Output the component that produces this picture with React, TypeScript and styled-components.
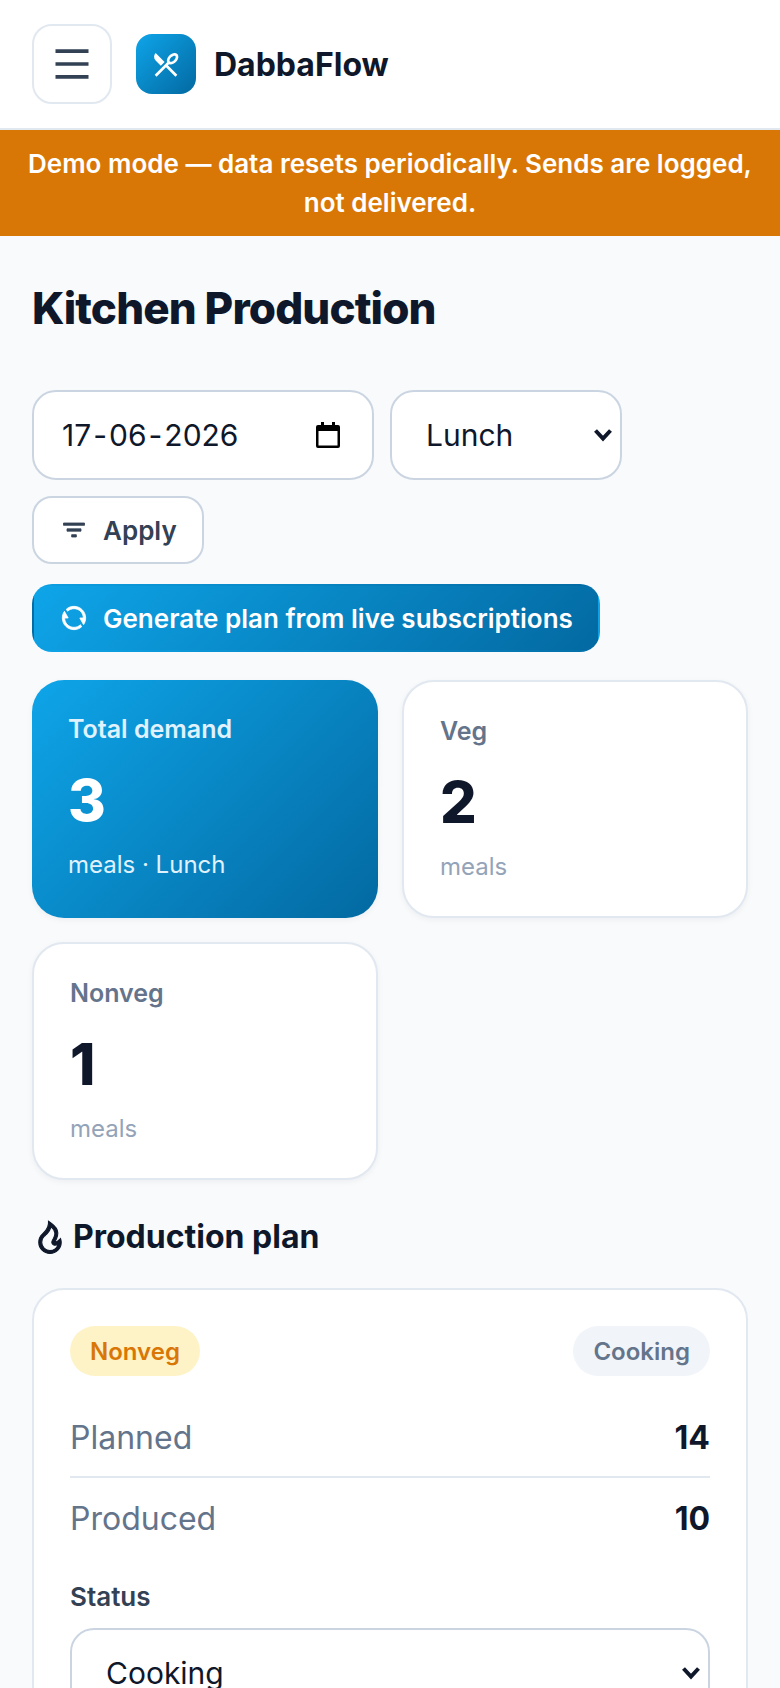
import React from "react";
import styled, { createGlobalStyle } from "styled-components";
import {
  RiFilter3Line,
  RiFireLine,
  RiMenuLine,
  RiRefreshLine,
  RiRestaurant2Line,
} from "react-icons/ri";

const GlobalStyle = createGlobalStyle`
  html, body {
    margin: 0;
    padding: 0;
    background: #f8fafc;
    font-family: Inter, "Noto Sans", sans-serif;
    color: #0f172a;
  }
  * { box-sizing: border-box; }
`;

const Page = styled.div`
  width: 780px;
  height: 1688px;
  overflow: hidden;
`;

const Header = styled.header`
  display: flex;
  align-items: center;
  height: 130px;
  padding: 0 32px;
  background: #fff;
  border-bottom: 2px solid #e2e8f0;
`;

const MenuButton = styled.button`
  display: flex;
  align-items: center;
  justify-content: center;
  width: 80px;
  height: 80px;
  padding: 0;
  margin-right: 24px;
  background: #fff;
  border: 2px solid #e2e8f0;
  border-radius: 20px;
  color: #334155;
  font-size: 44px;
`;

const LogoMark = styled.div`
  display: flex;
  align-items: center;
  justify-content: center;
  width: 60px;
  height: 60px;
  margin-right: 18px;
  border-radius: 16px;
  background: linear-gradient(135deg, #0ea5e9, #0369a1);
  color: #fff;
  font-size: 32px;
`;

const Brand = styled.div`
  font-size: 32px;
  font-weight: 700;
  color: #0f172a;
`;

const Banner = styled.div`
  height: 106px;
  padding: 14px 20px;
  background: #d97706;
  color: #fff;
  font-size: 26px;
  font-weight: 600;
  line-height: 39px;
  text-align: center;
`;

const Main = styled.main`
  padding: 44px 32px 0;
`;

const Title = styled.h1`
  margin: 0 0 54px;
  font-size: 44px;
  font-weight: 800;
  line-height: 56px;
  letter-spacing: -0.88px;
  color: #0f172a;
`;

const FilterRow = styled.div`
  display: flex;
  flex-wrap: wrap;
  gap: 16px;
  margin-bottom: 20px;
`;

const DateField = styled.div`
  display: flex;
  align-items: center;
  justify-content: space-between;
  width: 342px;
  height: 90px;
  padding: 0 32px 0 26px;
  background: #fff;
  border: 2px solid #cbd5e1;
  border-radius: 24px;
  font-size: 30px;
  color: #0f172a;
`;

const DatePart = styled.span`
  padding: 0 2px;
`;

const Picker = styled.select<{ $wide?: boolean }>`
  appearance: none;
  width: ${(p) => (p.$wide ? "640px" : "232px")};
  height: 90px;
  padding: 0 34px;
  background: #fff
    url("data:image/svg+xml,%3Csvg xmlns='http://www.w3.org/2000/svg' viewBox='0 0 20 14'%3E%3Cpath d='M2.5 2.5 10 10.5l7.5-8' fill='none' stroke='%230f172a' stroke-width='4'/%3E%3C/svg%3E")
    no-repeat right 7px center / 20px 14px;
  border: 2px solid #cbd5e1;
  border-radius: 24px;
  font-family: inherit;
  font-size: 30px;
  color: #0f172a;
`;

const ApplyButton = styled.button`
  display: flex;
  align-items: center;
  gap: 15px;
  height: 68px;
  padding: 0 25px 0 26px;
  background: #fff;
  border: 2px solid #cbd5e1;
  border-radius: 20px;
  font-family: inherit;
  font-size: 26px;
  font-weight: 600;
  color: #334155;
  svg { font-size: 28px; stroke: currentColor; stroke-width: 0.7px; }
`;

const GenerateButton = styled.button`
  display: flex;
  align-items: center;
  gap: 15px;
  height: 68px;
  padding: 0 25px 0 26px;
  margin-bottom: 28px;
  border: 2px solid transparent;
  border-radius: 20px;
  background: linear-gradient(135deg, #0ea5e9, #0369a1);
  font-family: inherit;
  font-size: 26px;
  font-weight: 600;
  color: #fff;
  svg { font-size: 28px; stroke: currentColor; stroke-width: 0.7px; }
`;

const StatGrid = styled.div`
  display: grid;
  grid-template-columns: 1fr 1fr;
  gap: 24px;
  margin-bottom: 37px;
`;

const StatCard = styled.div<{ $accent?: boolean }>`
  height: 238px;
  padding: 34px 36px;
  border-radius: 32px;
  border: ${(p) => (p.$accent ? "0" : "2px solid #e2e8f0")};
  background: ${(p) =>
    p.$accent ? "linear-gradient(135deg, #0ea5e9, #0369a1)" : "#fff"};
  box-shadow: 0 2px 6px rgba(15, 23, 42, 0.05);
`;

const StatLabel = styled.div<{ $accent?: boolean }>`
  font-size: 25px;
  font-weight: 600;
  line-height: 30px;
  color: ${(p) => (p.$accent ? "#e0f2fe" : "#64748b")};
`;

const StatValue = styled.div<{ $accent?: boolean }>`
  margin-top: 20px;
  font-size: 57.6px;
  font-weight: 800;
  line-height: 72px;
  color: ${(p) => (p.$accent ? "#fff" : "#0f172a")};
`;

const StatNote = styled.div<{ $accent?: boolean }>`
  margin-top: 13px;
  font-size: 24px;
  line-height: 32px;
  color: ${(p) => (p.$accent ? "#e0f2fe" : "#94a3b8")};
`;

const SectionTitle = styled.h2`
  display: flex;
  align-items: center;
  gap: 5px;
  margin: 0 0 31px;
  font-size: 32px;
  font-weight: 700;
  line-height: 40px;
  color: #0f172a;
  svg { font-size: 36px; stroke: currentColor; stroke-width: 0.7px; }
`;

const PlanCard = styled.div`
  padding: 36px;
  height: 600px;
  background: #fff;
  border: 2px solid #e2e8f0;
  border-radius: 32px;
`;

const BadgeRow = styled.div`
  display: flex;
  justify-content: space-between;
  margin-bottom: 22px;
`;

const Badge = styled.span<{ $tone: "warn" | "muted" }>`
  display: inline-flex;
  align-items: center;
  height: 50px;
  padding: 0 20px;
  border-radius: 25px;
  font-size: 24px;
  font-weight: 600;
  background: ${(p) => (p.$tone === "warn" ? "#fef3c7" : "#f1f5f9")};
  color: ${(p) => (p.$tone === "warn" ? "#d97706" : "#64748b")};
`;

const MetricRow = styled.div<{ $divided?: boolean }>`
  display: flex;
  align-items: center;
  justify-content: space-between;
  height: 80px;
  border-bottom: ${(p) => (p.$divided ? "2px solid #e2e8f0" : "0")};
`;

const MetricLabel = styled.span`
  font-size: 32px;
  color: #64748b;
`;

const MetricValue = styled.span`
  font-size: 32px;
  font-weight: 700;
  color: #0f172a;
`;

const StatusLabel = styled.label`
  display: block;
  margin: 23px 0 15px;
  font-size: 26px;
  font-weight: 600;
  line-height: 32px;
  color: #334155;
`;

const CalendarIcon = () => (
  <svg width="24" height="26" viewBox="0 0 24 26" fill="none">
    <path d="M5 0h3v3h8V0h3v3h3a2 2 0 0 1 2 2v19a2 2 0 0 1-2 2H2a2 2 0 0 1-2-2V5a2 2 0 0 1 2-2h3V0z" fill="#000" />
    <rect x="2.5" y="9" width="19" height="14.5" fill="#fff" />
  </svg>
);

export default function App() {
  return (
    <Page>
      <GlobalStyle />
      <Header>
        <MenuButton>
          <RiMenuLine />
        </MenuButton>
        <LogoMark>
          <RiRestaurant2Line />
        </LogoMark>
        <Brand>DabbaFlow</Brand>
      </Header>
      <Banner>Demo mode — data resets periodically. Sends are logged, not delivered.</Banner>
      <Main>
        <Title>Kitchen Production</Title>
        <FilterRow>
          <DateField>
            <span>
              <DatePart>17</DatePart>-<DatePart>06</DatePart>-<DatePart>2026</DatePart>
            </span>
            <CalendarIcon />
          </DateField>
          <Picker defaultValue="Lunch">
            <option>Lunch</option>
            <option>Dinner</option>
          </Picker>
          <ApplyButton>
            <RiFilter3Line />
            Apply
          </ApplyButton>
        </FilterRow>
        <GenerateButton>
          <RiRefreshLine />
          Generate plan from live subscriptions
        </GenerateButton>
        <StatGrid>
          <StatCard $accent>
            <StatLabel $accent>Total demand</StatLabel>
            <StatValue $accent>3</StatValue>
            <StatNote $accent>meals · Lunch</StatNote>
          </StatCard>
          <StatCard>
            <StatLabel>Veg</StatLabel>
            <StatValue>2</StatValue>
            <StatNote>meals</StatNote>
          </StatCard>
          <StatCard>
            <StatLabel>Nonveg</StatLabel>
            <StatValue>1</StatValue>
            <StatNote>meals</StatNote>
          </StatCard>
        </StatGrid>
        <SectionTitle>
          <RiFireLine />
          Production plan
        </SectionTitle>
        <PlanCard>
          <BadgeRow>
            <Badge $tone="warn">Nonveg</Badge>
            <Badge $tone="muted">Cooking</Badge>
          </BadgeRow>
          <MetricRow $divided>
            <MetricLabel>Planned</MetricLabel>
            <MetricValue>14</MetricValue>
          </MetricRow>
          <MetricRow>
            <MetricLabel>Produced</MetricLabel>
            <MetricValue>10</MetricValue>
          </MetricRow>
          <StatusLabel>Status</StatusLabel>
          <Picker $wide defaultValue="Cooking">
            <option>Cooking</option>
            <option>Ready</option>
          </Picker>
        </PlanCard>
      </Main>
    </Page>
  );
}
